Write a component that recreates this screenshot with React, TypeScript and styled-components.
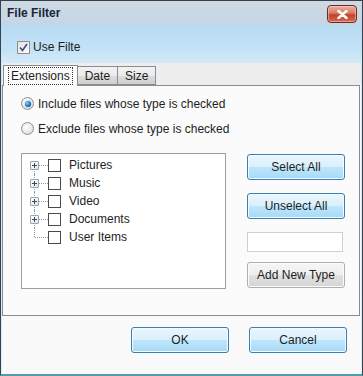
import React from "react";
import styled, { createGlobalStyle } from "styled-components";

const GlobalStyle = createGlobalStyle`
  html, body {
    margin: 0;
    padding: 0;
    background: #ffffff;
  }
  body {
    font-family: "Liberation Sans", Arial, sans-serif;
    font-size: 12px;
    color: #1e1e1e;
  }
`;

const Window = styled.div`
  width: 363px;
  height: 376px;
  box-sizing: border-box;
  border: 1px solid #36434f;
  border-bottom: 2px solid #4f9ea9;
  display: flex;
  flex-direction: column;
  background: linear-gradient(
    180deg,
    #cfd9e3 0px,
    #c4d6e6 22px,
    #b8dcf3 27px,
    #c3e2f6 48px,
    #d3eaf8 62px,
    #d8edf8 100%
  );
`;

const Glass = styled.div`
  height: 62px;
  display: flex;
  flex-direction: column;
`;

const TitleBar = styled.div`
  height: 26px;
  display: flex;
  align-items: flex-start;
  padding: 0 5px 0 6px;
`;

const Title = styled.span`
  font-weight: bold;
  font-size: 12px;
  color: #1b2533;
  margin-top: 5px;
`;

const CloseButton = styled.div`
  margin-left: auto;
  margin-top: 4px;
  width: 30px;
  height: 18px;
  box-sizing: border-box;
  border: 1px solid #6b2a22;
  border-radius: 4px;
  background: linear-gradient(180deg, #eab0a3 0%, #d97a64 45%, #c2422a 55%, #d26a4e 100%);
  box-shadow: inset 0 0 0 1px rgba(255, 220, 210, 0.5);
  display: flex;
  align-items: center;
  justify-content: center;
`;

const UseFilterRow = styled.label`
  display: flex;
  align-items: center;
  padding: 13px 0 0 16px;
  gap: 3px;
`;

const CheckBox = styled.span`
  width: 13px;
  height: 13px;
  box-sizing: border-box;
  border: 1px solid #8f8f8f;
  background: linear-gradient(135deg, #e4e4e4 0%, #fafafa 100%);
  display: inline-flex;
  align-items: center;
  justify-content: center;
  flex-shrink: 0;
`;

const Client = styled.div`
  flex: 1;
  margin: 0 1px 0 1px;
  background: #f9f9f9;
  display: flex;
  flex-direction: column;
`;

const TabStrip = styled.div`
  height: 22px;
  box-sizing: border-box;
  background: #ededed;
  display: flex;
  align-items: flex-end;
  padding-left: 1px;
  position: relative;
  z-index: 1;
`;

const Tab = styled.div<{ $active?: boolean }>`
  box-sizing: border-box;
  height: ${(p) => (p.$active ? "21px" : "19px")};
  margin-bottom: ${(p) => (p.$active ? "-1px" : "0")};
  padding: 0 ${(p) => (p.$active ? "5px" : "7px")};
  border: 1px solid #898c95;
  border-bottom: ${(p) => (p.$active ? "none" : "1px solid #898c95")};
  margin-left: ${(p) => (p.$active ? "0" : "-1px")};
  background: ${(p) =>
    p.$active ? "#fbfbfb" : "linear-gradient(180deg, #f2f2f2 0%, #ebebeb 50%, #dddddd 51%, #cfcfcf 100%)"};
  display: flex;
  align-items: center;
  font-size: 12px;
  color: #1e1e1e;
`;

const FocusText = styled.span`
  outline: 1px dotted #333;
  outline-offset: 0;
  padding: 1px 2px;
`;

const Panel = styled.div`
  height: 231px;
  box-sizing: border-box;
  border: 1px solid #898c95;
  margin-right: 1px;
  background: #fbfbfb;
  padding: 5px 0 0 18px;
  display: flex;
  flex-direction: column;
`;

const RadioRow = styled.label`
  height: 25px;
  display: flex;
  align-items: center;
  gap: 4px;
`;

const Radio = styled.span<{ $checked?: boolean }>`
  width: 13px;
  height: 13px;
  box-sizing: border-box;
  border-radius: 50%;
  border: 1px solid #8e8f8f;
  background: radial-gradient(circle at 40% 35%, #ffffff 0%, #e6e6e6 60%, #cfcfcf 100%);
  display: inline-flex;
  align-items: center;
  justify-content: center;
  &::after {
    content: "";
    display: ${(p) => (p.$checked ? "block" : "none")};
    width: 6px;
    height: 6px;
    border-radius: 50%;
    background: radial-gradient(circle at 35% 35%, #8fd0f5 0%, #1a74c0 55%, #0a3f7a 100%);
    box-shadow: 0 0 1px #2a6fb0;
  }
`;

const ListArea = styled.div`
  display: flex;
  margin-top: 12px;
  gap: 21px;
`;

const TreeBox = styled.div`
  width: 205px;
  height: 136px;
  box-sizing: border-box;
  border: 1px solid #a0a0a0;
  background: #ffffff;
  padding-top: 2px;
`;

const TreeRow = styled.div`
  height: 18px;
  display: flex;
  align-items: center;
`;

const Branch = styled.div<{ $pos: "first" | "mid" | "last" }>`
  width: 26px;
  height: 18px;
  position: relative;
  flex-shrink: 0;
  &::before {
    content: "";
    position: absolute;
    left: 12px;
    top: ${(p) => (p.$pos === "first" ? "9px" : "0")};
    height: ${(p) => (p.$pos === "mid" ? "18px" : "9px")};
    border-left: 1px dotted #9a9a9a;
  }
  &::after {
    content: "";
    position: absolute;
    left: 13px;
    right: 0;
    top: 9px;
    border-top: 1px dotted #9a9a9a;
  }
`;

const Expander = styled.span`
  position: absolute;
  left: 8px;
  top: 5px;
  width: 9px;
  height: 9px;
  box-sizing: border-box;
  border: 1px solid #9aa3ad;
  border-radius: 1px;
  background: linear-gradient(135deg, #ffffff 0%, #e2e6ea 100%);
  z-index: 1;
  &::before {
    content: "";
    position: absolute;
    left: 1px;
    top: 3px;
    width: 5px;
    height: 1px;
    background: #3a4a5a;
  }
  &::after {
    content: "";
    position: absolute;
    left: 3px;
    top: 1px;
    width: 1px;
    height: 5px;
    background: #3a4a5a;
  }
`;

const TreeCheck = styled.span`
  width: 13px;
  height: 13px;
  box-sizing: border-box;
  border: 1px solid #4a4a4a;
  background: #ffffff;
  margin-right: 8px;
  flex-shrink: 0;
`;

const ButtonColumn = styled.div`
  display: flex;
  flex-direction: column;
  padding-top: 1px;
`;

const Button = styled.button<{ $tone?: "blue" | "gray"; $gap?: number }>`
  width: 98px;
  height: 26px;
  margin-top: ${(p) => p.$gap ?? 0}px;
  box-sizing: border-box;
  border-radius: 3px;
  font-family: "Liberation Sans", Arial, sans-serif;
  font-size: 12px;
  color: #1e1e1e;
  padding: 0;
  border: 1px solid ${(p) => (p.$tone === "gray" ? "#b0b0b0" : "#3c7fb1")};
  box-shadow: inset 0 0 0 1px ${(p) => (p.$tone === "gray" ? "#fcfcfc" : "#f2fbff")};
  background: ${(p) =>
    p.$tone === "gray"
      ? "linear-gradient(180deg, #f6f6f6 0%, #eeeeee 50%, #e0e0e0 51%, #d6d6d6 100%)"
      : "linear-gradient(180deg, #eaf6fd 0%, #d9f0fc 50%, #bee6fd 51%, #a7d9f5 100%)"};
`;

const TextField = styled.input`
  width: 96px;
  height: 20px;
  margin-top: 13px;
  box-sizing: border-box;
  border: 1px solid #d0d0d0;
  background: #ffffff;
  padding: 0 3px;
`;

const Footer = styled.div`
  flex: 1;
  display: flex;
  justify-content: flex-end;
  align-items: flex-start;
  gap: 20px;
  padding: 11px 14px 0 0;
`;

const tree = ["Pictures", "Music", "Video", "Documents", "User Items"];

export default function App() {
  return (
    <>
      <GlobalStyle />
      <Window>
        <Glass>
          <TitleBar>
            <Title>File Filter</Title>
            <CloseButton>
              <svg width="11" height="9" viewBox="0 0 11 9">
                <path
                  d="M1.5 1 L9.5 8 M9.5 1 L1.5 8"
                  stroke="#ffffff"
                  strokeWidth="2.4"
                  strokeLinecap="round"
                />
              </svg>
            </CloseButton>
          </TitleBar>
          <UseFilterRow>
            <CheckBox>
              <svg width="9" height="9" viewBox="0 0 9 9">
                <path d="M1 4.5 L3.5 7.5 L8 1" fill="none" stroke="#3b4c8c" strokeWidth="1.6" />
              </svg>
            </CheckBox>
            <span>Use Filte</span>
          </UseFilterRow>
        </Glass>
        <Client>
          <TabStrip>
            <Tab $active>
              <FocusText>Extensions</FocusText>
            </Tab>
            <Tab>Date</Tab>
            <Tab>Size</Tab>
          </TabStrip>
          <Panel>
            <RadioRow>
              <Radio $checked />
              <span>Include files whose type is checked</span>
            </RadioRow>
            <RadioRow>
              <Radio />
              <span>Exclude files whose type is checked</span>
            </RadioRow>
            <ListArea>
              <TreeBox>
                {tree.map((name, i) => (
                  <TreeRow key={name}>
                    <Branch $pos={i === 0 ? "first" : i === tree.length - 1 ? "last" : "mid"}>
                      {i < tree.length - 1 && <Expander />}
                    </Branch>
                    <TreeCheck />
                    <span>{name}</span>
                  </TreeRow>
                ))}
              </TreeBox>
              <ButtonColumn>
                <Button>Select All</Button>
                <Button $gap={13}>Unselect All</Button>
                <TextField />
                <Button $tone="gray" $gap={10}>
                  Add New Type
                </Button>
              </ButtonColumn>
            </ListArea>
          </Panel>
          <Footer>
            <Button>OK</Button>
            <Button>Cancel</Button>
          </Footer>
        </Client>
      </Window>
    </>
  );
}
